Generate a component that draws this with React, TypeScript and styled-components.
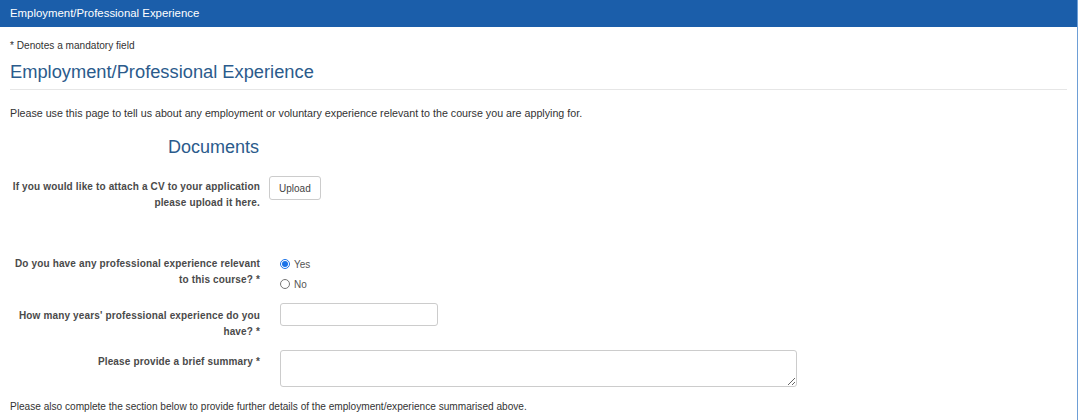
import React from 'react';
import styled, { createGlobalStyle } from 'styled-components';

const Global = createGlobalStyle`
  body {
    margin: 0;
    background: #fff;
    font-family: "Liberation Sans", Arial, sans-serif;
    color: #333;
  }
`

export default () => {
  return (
    <>
      <Global/>
      <Panel>
        <Heading>Employment/Professional Experience</Heading>
        <Body>
          <Note>* Denotes a mandatory field</Note>
          <Title>Employment/Professional Experience</Title>
          <Rule/>
          <Intro>Please use this page to tell us about any employment or voluntary experience relevant to the course you are applying for.</Intro>

          <SectionRow>
            <SectionTitle>Documents</SectionTitle>
          </SectionRow>

          <Row gap={9}>
            <Label pad={3}>If you would like to attach a CV to your application please upload it here.</Label>
            <div><Button type="button">Upload</Button></div>
          </Row>

          <Row gap={20} top={45}>
            <Label pad={0}>Do you have any professional experience relevant to this course? *</Label>
            <Radios>
              <Option><Radio type="radio" name="exp" defaultChecked/>Yes</Option>
              <Option><Radio type="radio" name="exp"/>No</Option>
            </Radios>
          </Row>

          <Row gap={20} top={11}>
            <Label pad={5}>How many years' professional experience do you have? *</Label>
            <div><Input type="text"/></div>
          </Row>

          <Row gap={20} top={10}>
            <Label pad={4}>Please provide a brief summary *</Label>
            <div><Summary/></div>
          </Row>

          <Footer>Please also complete the section below to provide further details of the employment/experience summarised above.</Footer>
        </Body>
      </Panel>
    </>
  )
}

const Panel = styled.div`
  width: 1078px;
  height: 420px;
  border-right: 1px solid #6e9fd6;
  box-sizing: border-box;
  overflow: hidden;
`

const Heading = styled.div`
  height: 27px;
  line-height: 27px;
  padding-left: 10px;
  background: #1b5eaa;
  color: #fff;
  font-size: 11.4px;
`

const Body = styled.div`
  padding: 12px 10px 0 10px;
`

const Note = styled.div`
  font-size: 10.1px;
  line-height: 14px;
`

const Title = styled.h2`
  margin: 7px 0 0;
  font-size: 18.3px;
  line-height: 24px;
  font-weight: normal;
  color: #2b5b8c;
`

const Rule = styled.hr`
  margin: 5px 0 0;
  border: 0;
  border-top: 1px solid #e6e6e6;
`

const Intro = styled.p`
  margin: 16px 0 0;
  font-size: 10.7px;
  line-height: 14px;
`

const SectionRow = styled.div`
  width: 249px;
  margin-top: 16px;
  text-align: right;
`

const SectionTitle = styled.h3`
  margin: 0;
  font-size: 18px;
  line-height: 22px;
  font-weight: normal;
  color: #2b5b8c;
`

const Row = styled.div<{gap: number, top?: number}>`
  display: grid;
  grid-template-columns: 250px auto;
  column-gap: ${p => p.gap}px;
  margin-top: ${p => p.top ?? 18}px;
  align-items: start;
`

const Label = styled.label<{pad: number}>`
  padding-top: ${p => p.pad}px;
  text-align: right;
  font-size: 10px;
  line-height: 16px;
  letter-spacing: 0.15px;
  font-weight: bold;
  color: #4a4a4a;
`

const Button = styled.button`
  height: 24px;
  padding: 0 9px;
  border: 1px solid #ccc;
  border-radius: 3px;
  background: #fff;
  color: #444;
  font-family: inherit;
  font-size: 10px;
`

const Radios = styled.div`
  display: flex;
  flex-direction: column;
  gap: 4px;
`

const Option = styled.label`
  display: flex;
  align-items: center;
  height: 16px;
  font-size: 10px;
  color: #555;
`

const Radio = styled.input`
  width: 10px;
  height: 10px;
  margin: 0 4px 0 0;
  accent-color: #1a73e8;
`

const Input = styled.input`
  width: 158px;
  height: 23px;
  box-sizing: border-box;
  border: 1px solid #ccc;
  border-radius: 3px;
`

const Summary = styled.textarea`
  width: 517px;
  height: 37px;
  box-sizing: border-box;
  border: 1px solid #ccc;
  border-radius: 3px;
  resize: vertical;
  display: block;
`

const Footer = styled.p`
  margin: 13px 0 0;
  font-size: 10.1px;
  line-height: 14px;
`
